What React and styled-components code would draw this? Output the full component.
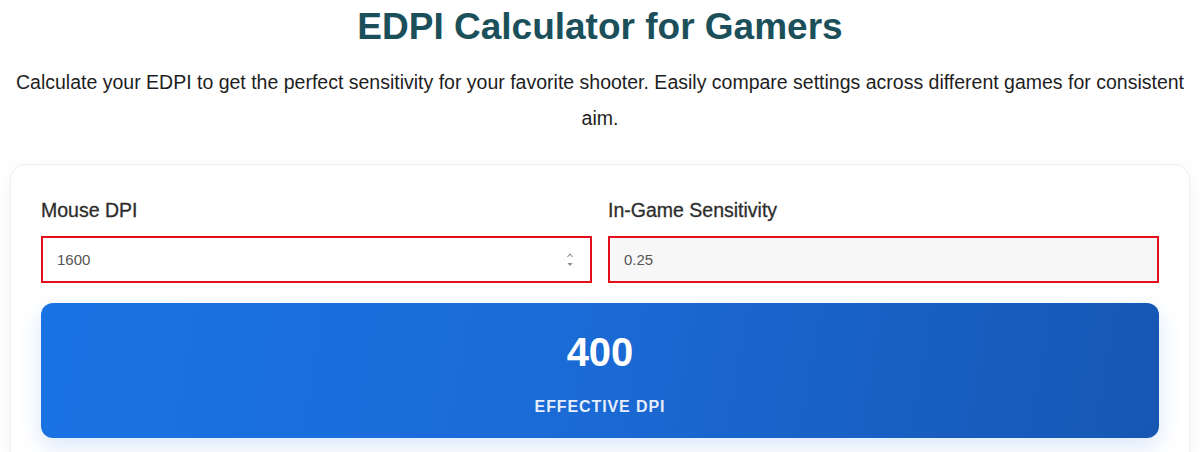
import React from 'react';
import styled, { createGlobalStyle } from 'styled-components';

const GlobalStyle = createGlobalStyle`
    * {
        box-sizing: border-box;
    }
    body {
        margin: 0;
        background: #ffffff;
        font-family: "Liberation Sans", Arial, sans-serif;
        color: #222;
    }
`;

const Page = styled.div`
    max-width: 1180px;
    margin: 0 auto;
    padding-top: 5px;
`;

const Title = styled.h1`
    margin: 0;
    font-size: 37px;
    line-height: 43px;
    font-weight: 700;
    text-align: center;
    color: #1b505b;
`;

const Intro = styled.p`
    margin: 16px 0 0;
    font-size: 19.5px;
    line-height: 36px;
    text-align: center;
    color: #1e1e1e;
`;

const Card = styled.div`
    margin-top: 28px;
    padding: 35px 30px 30px;
    background: #fff;
    border: 1px solid #efefef;
    border-radius: 16px;
    box-shadow: 0 4px 18px rgba(0, 0, 0, 0.05);
`;

const Fields = styled.div`
    display: grid;
    grid-template-columns: 1fr 1fr;
    gap: 16px;
`;

const Field = styled.div`
    display: flex;
    flex-direction: column;
`;

const Label = styled.label`
    font-size: 19.5px;
    line-height: 21px;
    font-weight: 500;
    -webkit-text-stroke: 0.3px #2d2d2d;
    color: #2d2d2d;
    margin-bottom: 15px;
`;

const InputBox = styled.div`
    display: flex;
    align-items: center;
    height: 47px;
    padding: 0 16px 0 14px;
    border: 2px solid #e3101c;
    background: ${p => (p.$muted ? '#f7f7f7' : '#fff')};
`;

const Input = styled.input`
    flex: 1;
    min-width: 0;
    border: none;
    outline: none;
    background: transparent;
    font-family: inherit;
    font-size: 15px;
    color: #555;
    padding: 0;
`;

const Result = styled.div`
    margin-top: 20px;
    height: 135px;
    padding-top: 28px;
    border-radius: 12px;
    background: linear-gradient(100deg, #1a73e3 0%, #1b6bd8 45%, #1657b3 100%);
    box-shadow: 0 8px 22px rgba(26, 115, 232, 0.16);
    text-align: center;
    color: #fff;
`;

const Value = styled.div`
    font-size: 40px;
    line-height: 43px;
    font-weight: 700;
`;

const ValueLabel = styled.div`
    margin-top: 23px;
    font-size: 16px;
    line-height: 19px;
    font-weight: 700;
    letter-spacing: 0.9px;
    text-transform: uppercase;
    color: #e6eefc;
`;

const Spinner = () => (
    <svg width="8" height="18" viewBox="0 0 8 18" aria-hidden="true">
        <path d="M1.5 6 L4 3 L6.5 6" fill="none" stroke="#8a8a8a" strokeWidth="1.1" />
        <path d="M1.5 12 L4 15 L6.5 12 Z" fill="#8a8a8a" />
    </svg>
);

export default function App() {
    return (
        <>
            <GlobalStyle />
            <Page>
                <Title>EDPI Calculator for Gamers</Title>
                <Intro>
                    Calculate your EDPI to get the perfect sensitivity for your favorite shooter. Easily compare settings across different games for consistent aim.
                </Intro>
                <Card>
                    <Fields>
                        <Field>
                            <Label htmlFor="dpi">Mouse DPI</Label>
                            <InputBox>
                                <Input id="dpi" type="text" defaultValue="1600" />
                                <Spinner />
                            </InputBox>
                        </Field>
                        <Field>
                            <Label htmlFor="sens">In-Game Sensitivity</Label>
                            <InputBox $muted>
                                <Input id="sens" type="text" defaultValue="0.25" />
                            </InputBox>
                        </Field>
                    </Fields>
                    <Result>
                        <Value>400</Value>
                        <ValueLabel>Effective DPI</ValueLabel>
                    </Result>
                </Card>
            </Page>
        </>
    );
}
